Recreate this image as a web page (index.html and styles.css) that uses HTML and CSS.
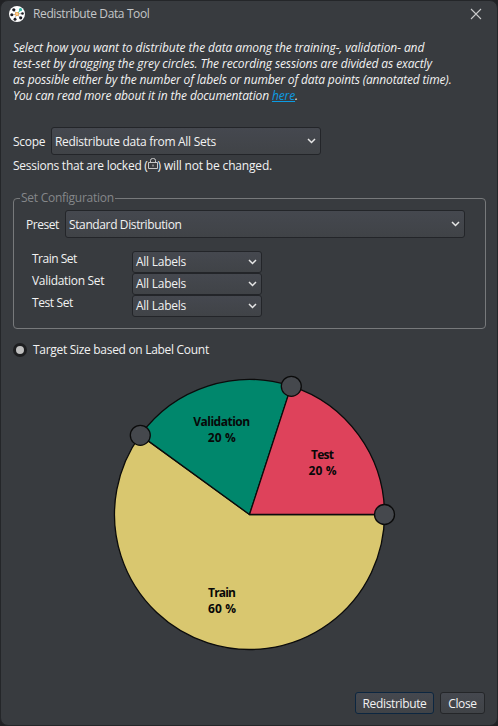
FILE: index.html
```html
<!DOCTYPE html>
<html lang="en">
<head>
<meta charset="utf-8">
<title>Redistribute Data Tool</title>
<link rel="stylesheet" href="styles.css">
</head>
<body>
<main class="window">
  <header class="titlebar">
    <svg class="logo" viewBox="0 0 16 16"><circle cx="8" cy="8" r="8" fill="#fff"/><g stroke="#777" stroke-width=".6"><path d="M8 8L4 3.500M8 8L2.500 9M8 8L5.500 13M8 8L11.500 12M8 8L13.500 7.500"/></g><path d="M8 8l3.500-4" stroke="#35b5a5"/><g fill="#1c1c24"><circle cx="4.800" cy="3.800" r="1.600"/><circle cx="2.800" cy="8.800" r="1.500"/><circle cx="6" cy="13.200" r="1.500"/><circle cx="11.700" cy="11.800" r="1.600"/><circle cx="13.500" cy="7.500" r="1.300"/></g><circle cx="11.500" cy="3.700" r="1.600" fill="#35b5a5"/><circle cx="8" cy="8" r="2" fill="#f4a340"/><circle cx="8" cy="8" r=".8" fill="#fff"/></svg>
    <h1 class="title">Redistribute Data Tool</h1>
    <svg class="close" viewBox="0 0 12 12"><path d="M1 1l10 10M11 1L1 11"/></svg>
  </header>
  <p class="intro"><span class="l1">Select how you want to distribute the data among the training-, validation- and</span><br><span class="l2">test-set by dragging the grey circles. The recording sessions are divided as exactly</span><br><span class="l3">as possible either by the number of labels or number of data points (annotated time).</span><br><span class="l4">You can read more about it in the documentation <a href="#">here</a>.</span></p>
  <div class="scope"><span class="scope-label">Scope</span>
    <div class="select scope-select"><span class="scope-value">Redistribute data from All Sets</span><svg class="chevron" viewBox="0 0 9 6"><path d="M1 1l3.500 3.500L8 1"/></svg></div>
  </div>
  <p class="locked"><span class="locked-a">Sessions that are locked (</span><svg class="lock" viewBox="0 0 10 12"><path d="M.5 4.500h9v6h-9zM2.500 4.500V2.500a2 2 0 0 1 2-2h1a2 2 0 0 1 2 2v2M5 6.500v2"/></svg><span class="locked-b">) will not be changed.</span></p>
  <fieldset class="config">
    <legend><span class="legend">Set Configuration</span></legend>
    <div class="preset"><span class="preset-label">Preset</span>
      <div class="select preset-select"><span class="preset-value">Standard Distribution</span><svg class="chevron" viewBox="0 0 9 6"><path d="M1 1l3.500 3.500L8 1"/></svg></div>
    </div>
    <div class="sets">
      <div class="set"><span class="set-label train">Train Set</span><div class="select small"><span class="all">All Labels</span><svg class="chevron" viewBox="0 0 9 6"><path d="M1 1l3.500 3.500L8 1"/></svg></div></div>
      <div class="set"><span class="set-label valid">Validation Set</span><div class="select small"><span class="all">All Labels</span><svg class="chevron" viewBox="0 0 9 6"><path d="M1 1l3.500 3.500L8 1"/></svg></div></div>
      <div class="set"><span class="set-label test">Test Set</span><div class="select small"><span class="all">All Labels</span><svg class="chevron" viewBox="0 0 9 6"><path d="M1 1l3.500 3.500L8 1"/></svg></div></div>
    </div>
  </fieldset>
  <div class="target"><span class="radio"></span><span class="target-label">Target Size based on Label Count</span></div>
  <svg class="pie" viewBox="104 370 300 290">
    <g stroke="#0b0b0b" stroke-width="1.300" stroke-linejoin="round">
      <path fill="#d9c76f" d="M249.500 514.500H384.500A135 135 0 1 1 140.300 435.100Z"/>
      <path fill="#00876c" d="M249.500 514.500L140.300 435.100A135 135 0 0 1 291.200 386.100Z"/>
      <path fill="#de425b" d="M249.500 514.500L291.200 386.100A135 135 0 0 1 384.500 514.500Z"/>
      <g fill="#45484d"><circle cx="140.300" cy="435.300" r="10"/><circle cx="291.300" cy="386.300" r="10"/><circle cx="384.500" cy="514.500" r="10"/></g>
    </g>
    <g class="pie-text">
      <text x="221.700" y="426" textLength="57">Validation</text><text x="221.700" y="442" textLength="28">20 %</text>
      <text x="322.500" y="459" textLength="23">Test</text><text x="322.500" y="475" textLength="28">20 %</text>
      <text x="222" y="597" textLength="28">Train</text><text x="222" y="613" textLength="28">60 %</text>
    </g>
  </svg>
  <footer class="actions"><button class="btn primary"><span class="b1">Redistribute</span></button><button class="btn"><span class="b2">Close</span></button></footer>
</main>
</body>
</html>
```
FILE: styles.css
```css
* { box-sizing: border-box; }
body { margin: 0; background: #202124; font: 12px/16px "Open Sans", "Noto Sans", sans-serif; color: #f2f2f2; }
span { white-space: nowrap; }
.window { width: 498px; height: 726px; background: #383b3f; border: 1px solid #242629; border-radius: 8px; display: flex; flex-direction: column; overflow: hidden; }
.titlebar { height: 26px; flex: none; display: flex; align-items: center; padding: 0 15px 0 8px; }
.logo { width: 16px; height: 16px; }
.title { margin: 0 0 0 8px; font-size: 12px; font-weight: 400; color: #c4c6c8; flex: 1; letter-spacing: -.38px; }
.close { width: 12px; height: 12px; fill: none; stroke: #c8c9ca; stroke-width: 1.1; }
.intro { margin: 13px 0 0 12px; font-style: italic; }
.intro a { color: #0b9be3; }
.l1 { letter-spacing: -.08px; }
.l2 { letter-spacing: -.1px; }
.l3 { letter-spacing: -.15px; }
.l4 { letter-spacing: -.13px; }
.scope { display: flex; align-items: center; margin: 23px 0 0 12px; height: 28px; }
.scope-label { width: 38px; letter-spacing: -.3px; padding-top: 2px; }
.select { display: flex; align-items: center; justify-content: space-between; height: 28px; border: 1px solid #232529; border-radius: 3px; background: linear-gradient(#45484f, #404347); padding: 0 4px 0 3px; }
.scope-select { width: 270px; }
.scope-value { letter-spacing: -.29px; padding-top: 2px; }
.chevron { width: 9px; height: 6px; fill: none; stroke: #e6e6e6; stroke-width: 1.5; }
.locked { display: flex; margin: 3px 0 0 12px; height: 16px; }
.locked-a { letter-spacing: -.26px; }
.locked-b { letter-spacing: -.17px; }
.lock { width: 10px; height: 12px; fill: none; stroke: #c8c8c8; }
.config { height: 139px; margin: 16px 11px 0 12px; padding: 4px 0 0 12px; border: 1px solid #77797b; border-radius: 4px; min-width: 0; }
legend { padding: 0 1px; margin-left: -6px; color: #85878a; height: 16px; }
.legend { letter-spacing: -.26px; }
.preset { display: flex; align-items: center; }
.preset-label { width: 39px; letter-spacing: -.45px; padding-top: 2px; }
.preset-select { width: 400px; }
.preset-value { letter-spacing: -.38px; padding-top: 2px; }
.sets { padding: 13px 0 0 6px; }
.set { display: flex; height: 22px; }
.set-label { width: 100px; line-height: 16px; }
.train { letter-spacing: -.5px; }
.valid { letter-spacing: -.3px; }
.test { letter-spacing: -.4px; }
.all { letter-spacing: -.25px; }
.small { width: 130px; height: 22px; }
.target { display: flex; align-items: center; margin: 13px 0 0 12px; height: 16px; gap: 6px; }
.target-label { letter-spacing: -.3px; }
.radio { width: 14px; height: 14px; border: 3px solid #1d1e20; border-radius: 50%; background: #bfbfbf; }
.pie { width: 300px; height: 290px; margin: 12px 0 0 103px; flex: none; }
.pie-text { font: 700 12px "Open Sans", sans-serif; text-anchor: middle; fill: #080808; }
.actions { display: flex; justify-content: flex-end; gap: 6px; margin: 32px 12px 0 0; }
.btn { height: 22px; width: 45px; padding: 0; border: 1px solid #242629; border-radius: 3px; background: linear-gradient(#45484f, #404347); font: inherit; color: inherit; }
.btn span { position: relative; top: 1px; }
.b1 { letter-spacing: -.35px; }
.b2 { letter-spacing: -.35px; }
.primary { width: 79px; border-color: #0c2640; }
```
